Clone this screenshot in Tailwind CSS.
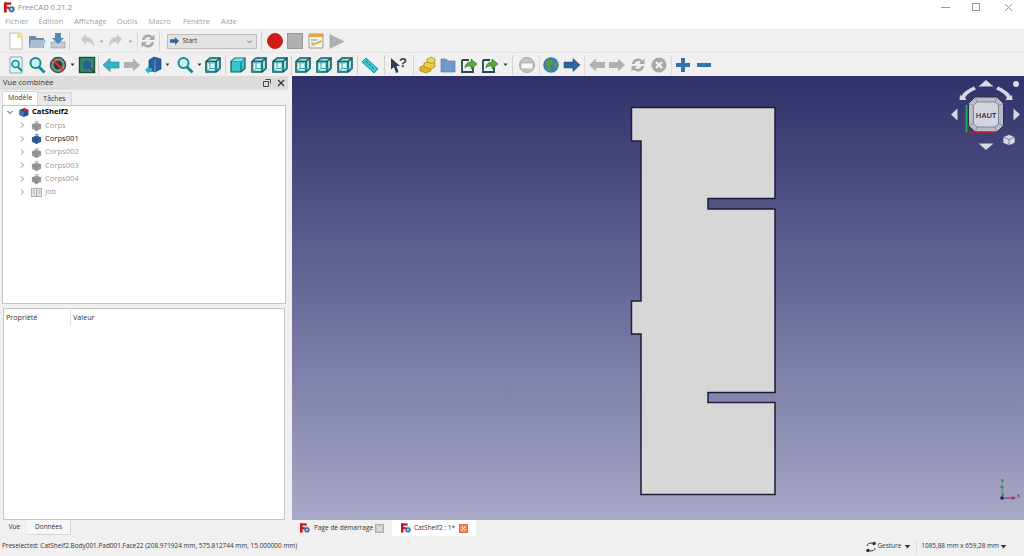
<!DOCTYPE html>
<html lang="fr">
<head>
<meta charset="UTF-8" />
<title>FreeCAD 0.21.2</title>
<script src="https://cdn.jsdelivr.net/npm/@tailwindcss/browser@4"></script>
</head>
<body class="bg-[#f0f0f0]">

<!-- shared icons -->
<svg class="hidden">
  <symbol id="logo" viewBox="0 0 12 12">
    <rect x="0" y="0.5" width="3" height="11" fill="#c5161d"/>
    <rect x="0" y="0.5" width="8" height="2.6" fill="#c5161d"/>
    <rect x="0" y="5" width="6" height="2.4" fill="#c5161d"/>
    <circle cx="8.3" cy="8" r="3" fill="#3b6ea8"/>
    <circle cx="8.3" cy="8" r="3.4" fill="none" stroke="#3b6ea8" stroke-width="1" stroke-dasharray="1 1"/>
    <circle cx="8.3" cy="8" r="1.1" fill="#fff"/>
  </symbol>
  <symbol id="chev-r" viewBox="0 0 8 8"><path d="M3 1.5 5.5 4 3 6.5" fill="none" stroke="#8a8a8a" stroke-width="1"/></symbol>
  <symbol id="chev-d" viewBox="0 0 8 8"><path d="M1.5 3 4 5.5 6.5 3" fill="none" stroke="#444" stroke-width="1"/></symbol>
  <symbol id="drop" viewBox="0 0 5 5"><path d="M0.5 1.5h4L2.5 4z" fill="#333"/></symbol>
  <symbol id="drop-gray" viewBox="0 0 5 5"><path d="M0.5 1.5h4L2.5 4z" fill="#a5a5a5"/></symbol>
  <symbol id="body-gray" viewBox="0 0 12 12">
    <path d="M1 5 6 2.500l5 2.500v4.500L6 12 1 9.500z" fill="#9a9a9a"/>
    <path d="M1 5l5 2.500L11 5M6 7.500V12" fill="none" stroke="#777" stroke-width=".7"/>
    <path d="M3.500 2 6.500 .5 9 2 6 3.500z" fill="#c2c2c2"/>
  </symbol>
  <symbol id="body-blue" viewBox="0 0 12 12">
    <path d="M1 5 6 2.500l5 2.500v4.500L6 12 1 9.500z" fill="#2f6299"/>
    <path d="M1 5l5 2.500L11 5M6 7.500V12" fill="none" stroke="#173e69" stroke-width=".7"/>
    <path d="M3.500 2 6.500 .5 9 2 6 3.500z" fill="#7ba6d2"/>
  </symbol>
  <symbol id="wire" viewBox="0 0 18 18">
    <path d="M2 5.500 6 2h10v10.500L12 16H2z" fill="#9fdfe1" stroke="#155a60" stroke-width="1.600"/>
    <path d="M2 5.500h10V16M12 5.500 16 2" fill="none" stroke="#155a60" stroke-width="1.600"/>
    <path d="M4 8h6v6H4z" fill="#e6f7f7"/>
    <path d="M6 2v10.500h10M6 12.500 2 16" fill="none" stroke="#2aa7ad" stroke-width="1"/>
  </symbol>
  <symbol id="solid" viewBox="0 0 18 18">
    <path d="M2 5.500 6 2h10v10.500L12 16H2z" fill="#37c6cc" stroke="#155a60" stroke-width="1.200"/>
    <path d="M2 5.500h10V16M12 5.500 16 2" fill="none" stroke="#155a60" stroke-width="1"/>
    <path d="M2.500 5.500 6 2.500h9.500L12 5.500z" fill="#7fe3e6"/>
  </symbol>
  <symbol id="mag" viewBox="0 0 18 18">
    <circle cx="7.500" cy="7" r="5" fill="#c9f0f0" stroke="#148c93" stroke-width="2"/>
    <path d="M11 11l5.500 5.500" stroke="#148c93" stroke-width="3"/>
  </symbol>
  <symbol id="arrow-teal" viewBox="0 0 18 18"><path d="M1 9l7-6.500V6h9v6H8v3.500z" fill="#2fb4bd" stroke="#1f8b93" stroke-width=".6"/></symbol>
  <symbol id="arrow-gray-r" viewBox="0 0 18 18"><path d="M17 9l-7-6.500V6H1v6h9v3.500z" fill="#b0b0b0"/></symbol>
  <symbol id="arrow-gray-l" viewBox="0 0 18 18"><path d="M1 9l7-6.500V6h9v6H8v3.500z" fill="#b0b0b0"/></symbol>
  <symbol id="arrow-blue-r" viewBox="0 0 18 18"><path d="M17 9l-7-6.500V6H1v6h9v3.500z" fill="#2d659f" stroke="#1d4674" stroke-width=".5"/></symbol>
  <symbol id="sync-gray" viewBox="0 0 18 18">
    <path d="M3 8a6 6 0 0 1 10.500-3.500L15.500 2.500V8H10l2-2A4 4 0 0 0 5.500 8z" fill="#a8a8a8"/>
    <path d="M15 10a6 6 0 0 1-10.500 3.500L2.500 15.500V10H8l-2 2a4 4 0 0 0 6.500-2z" fill="#a8a8a8"/>
  </symbol>
  <symbol id="link-doc" viewBox="0 0 18 18">
    <path d="M2 4h7M2 4v12h11v-5" fill="none" stroke="#1f4b4f" stroke-width="1.800"/>
    <path d="M5 12c0-4 3-6 6-6V3l6 5-6 5v-3c-3 0-5 0-6 2z" fill="#5aa83c" stroke="#2e6a1e" stroke-width=".6"/>
  </symbol>
</svg>

<div class="w-[1024px] h-[556px] flex flex-col overflow-hidden font-['Open_Sans','Noto_Sans',sans-serif] text-[7.6px] leading-none whitespace-nowrap">

  <!-- title bar -->
  <div class="h-[15px] bg-white flex items-center shrink-0">
    <svg class="w-[11px] h-[11px] ml-[4px]"><use href="#logo"/></svg>
    <span class="ml-[3px] text-[#8c8c8c]">FreeCAD 0.21.2</span>
    <svg class="w-[9px] h-[9px] ml-auto" viewBox="0 0 9 9"><path d="M0 4.500h9" stroke="#9a9a9a"/></svg>
    <svg class="w-[9px] h-[9px] ml-[22px]" viewBox="0 0 9 9"><rect x=".5" y=".5" width="7" height="7" fill="none" stroke="#9a9a9a"/></svg>
    <svg class="w-[9px] h-[9px] ml-[23px] mr-[11px]" viewBox="0 0 9 9"><path d="M1 1l7 7M8 1l-7 7" stroke="#9a9a9a"/></svg>
  </div>

  <!-- menu -->
  <div class="h-[15px] bg-white flex items-center shrink-0 text-[#a0a0a0] border-b border-[#ececec]">
    <span class="ml-[5px]">Fichier</span>
    <span class="ml-[10px]">Édition</span>
    <span class="ml-[11px]">Affichage</span>
    <span class="ml-[10px]">Outils</span>
    <span class="ml-[11px]">Macro</span>
    <span class="ml-[12px]">Fenêtre</span>
    <span class="ml-[11px]">Aide</span>
  </div>

  <!-- toolbar 1 -->
  <div class="h-[23px] flex items-center shrink-0 bg-[#f0f0f0] border-b border-[#e6e6e6]">
    <svg class="w-[18px] h-[18px] ml-[7px]" viewBox="0 0 18 18"><path d="M3 1h9l3 3v13H3z" fill="#fff" stroke="#bcbcbc"/><path d="M10 1h5v5h-5z" fill="#f3ea5c"/></svg>
    <svg class="w-[18px] h-[18px] ml-[3px]" viewBox="0 0 18 18"><path d="M1 4h6l2 2h7v10H1z" fill="#6f8aa3"/><path d="M3 8h15l-3 8H1z" fill="#a9bfd3"/></svg>
    <svg class="w-[18px] h-[18px] ml-[3px]" viewBox="0 0 18 18"><path d="M2 10h14v6H2z" fill="#c3ccd4" stroke="#8c97a2" stroke-width=".6"/><path d="M6 1h6v5h3l-6 6-6-6h3z" fill="#4d8ab5"/></svg>
    <div class="w-px h-[20px] bg-[#d2d2d2] ml-[2px]"></div>
    <svg class="w-[18px] h-[18px] ml-[8px]" viewBox="0 0 18 18"><path d="M3 7l5-5v3c5 0 8 3 8 10-2-4-4-5-8-5v3z" fill="#c8c8c8"/></svg>
    <svg class="w-[5px] h-[5px] ml-[3px]"><use href="#drop-gray"/></svg>
    <svg class="w-[18px] h-[18px] ml-[3px]" viewBox="0 0 18 18"><path d="M15 7l-5-5v3C5 5 2 8 2 15c2-4 4-5 8-5v3z" fill="#c8c8c8"/></svg>
    <svg class="w-[5px] h-[5px] ml-[3px]"><use href="#drop-gray"/></svg>
    <div class="w-px h-[20px] bg-[#dcdcdc] ml-[4px]"></div>
    <svg class="w-[18px] h-[18px] ml-[0.5px]"><use href="#sync-gray"/></svg>
    <div class="w-px h-[20px] bg-[#d2d2d2] ml-[2px]"></div>
    <div class="w-[90px] h-[15px] ml-[7px] flex items-center border border-[#bdbdbd] bg-[#e3e3e3] text-[#333] text-[6.5px]">
      <svg class="w-[11px] h-[10px] ml-[1px] mr-[3px]" viewBox="0 0 18 18"><path d="M17 9l-7-7v4H1v6h9v4z" fill="#2d659f"/></svg>
      <span>Start</span>
      <svg class="w-[7px] h-[7px] ml-auto mr-[3px]" viewBox="0 0 8 8"><path d="M1.500 3 4 5.500 6.500 3" fill="none" stroke="#555"/></svg>
    </div>
    <div class="w-px h-[20px] bg-[#d2d2d2] ml-[4px]"></div>
    <svg class="w-[16px] h-[16px] ml-[5px]" viewBox="0 0 16 16"><circle cx="8" cy="8" r="7.500" fill="#d61a1a" stroke="#9d1414" stroke-width=".8"/></svg>
    <svg class="w-[16px] h-[16px] ml-[4px]" viewBox="0 0 16 16"><rect x=".5" y=".5" width="15" height="15" fill="#b0b0b0" stroke="#999"/></svg>
    <svg class="w-[18px] h-[18px] ml-[4px]" viewBox="0 0 18 18"><path d="M2 2h14v14H2z" fill="#f4f4f4" stroke="#999"/><path d="M2 2h14v3H2z" fill="#e8a33c"/><path d="M4 13l10-5 1 2-10 4z" fill="#c8b13a"/><path d="M4 8h6M4 11h3" stroke="#888"/></svg>
    <svg class="w-[17px] h-[17px] ml-[3px]" viewBox="0 0 17 17"><path d="M1.500 1v15l15-7.500z" fill="#afafaf"/></svg>
  </div>

  <!-- toolbar 2 -->
  <div class="h-[23px] flex items-center shrink-0 bg-[#f0f0f0]">
    <svg class="w-[18px] h-[18px] ml-[7px]" viewBox="0 0 18 18"><path d="M3 1h12v16H3z" fill="#e9f4f5" stroke="#8aa"/><circle cx="8.500" cy="8" r="3.500" fill="#c9f0f0" stroke="#148c93" stroke-width="1.600"/><path d="M11 11l4 4" stroke="#148c93" stroke-width="2.200"/></svg>
    <svg class="w-[18px] h-[18px] ml-[3px]"><use href="#mag"/></svg>
    <svg class="w-[18px] h-[18px] ml-[3px]" viewBox="0 0 18 18"><circle cx="9" cy="9" r="7.500" fill="#7f9a92" stroke="#37524b" stroke-width="1.400"/><circle cx="9" cy="9" r="4.500" fill="#24404a"/><path d="M3.500 3.500l11 11" stroke="#d8342b" stroke-width="2"/></svg>
    <svg class="w-[5px] h-[5px] ml-[3px]"><use href="#drop"/></svg>
    <svg class="w-[18px] h-[18px] ml-[3px]" viewBox="0 0 18 18"><rect x="1.500" y="1.500" width="15" height="15" fill="#2f8e63" stroke="#174e38" stroke-width="1.400"/><path d="M5 6l4-2 4 2v6l-4 2-4-2z" fill="#295f96"/><path d="M12 12l4.500 4.500" stroke="#222" stroke-width="1"/></svg>
    <div class="w-px h-[20px] bg-[#d2d2d2] ml-[2px]"></div>
    <svg class="w-[18px] h-[18px] ml-[3px]"><use href="#arrow-teal"/></svg>
    <svg class="w-[18px] h-[18px] ml-[3px]"><use href="#arrow-gray-r"/></svg>
    <svg class="w-[18px] h-[18px] ml-[3px]" viewBox="0 0 18 18"><path d="M5 4l5-3 7 2v10l-6 3-6-2z" fill="#2a5f9e" stroke="#173a66" stroke-width=".6"/><path d="M11 4v12" stroke="#6d9ccc"/><path d="M1 14l4-4v2h3v4H5v2z" fill="#2fb4bd"/></svg>
    <svg class="w-[5px] h-[5px] ml-[3px]"><use href="#drop"/></svg>
    <svg class="w-[18px] h-[18px] ml-[6px]"><use href="#mag"/></svg>
    <svg class="w-[5px] h-[5px] ml-[3px]"><use href="#drop"/></svg>
    <svg class="w-[18px] h-[18px] ml-[2px]"><use href="#wire"/></svg>
    <div class="w-px h-[20px] bg-[#d2d2d2] ml-[3px]"></div>
    <svg class="w-[18px] h-[18px] ml-[3px]"><use href="#solid"/></svg>
    <svg class="w-[18px] h-[18px] ml-[3px]"><use href="#wire"/></svg>
    <svg class="w-[18px] h-[18px] ml-[3px]"><use href="#wire"/></svg>
    <div class="w-px h-[20px] bg-[#d2d2d2] ml-[2px]"></div>
    <svg class="w-[18px] h-[18px] ml-[2px]"><use href="#wire"/></svg>
    <svg class="w-[18px] h-[18px] ml-[3px]"><use href="#wire"/></svg>
    <svg class="w-[18px] h-[18px] ml-[3px]"><use href="#wire"/></svg>
    <div class="w-px h-[20px] bg-[#d2d2d2] ml-[3px]"></div>
    <svg class="w-[18px] h-[18px] ml-[3px]" viewBox="0 0 18 18"><path d="M1 6l4-4 12 11-4 4z" fill="#37c6cc" stroke="#187f86" stroke-width=".8"/><path d="M5 5l1.500 1.500M8 8l1.500 1.500M11 11l1.500 1.500" stroke="#126469"/></svg>
    <div class="w-px h-[20px] bg-[#d2d2d2] ml-[5px]"></div>
    <svg class="w-[18px] h-[18px] ml-[5px]" viewBox="0 0 18 18"><path d="M1 2l9 8H6.500l2 6-2.500 1-2-6L1 13.500z" fill="#2a3f52"/><text x="9" y="11" font-size="13" font-weight="700" fill="#2a3f52" font-family="Liberation Sans, sans-serif">?</text></svg>
    <div class="w-px h-[20px] bg-[#d2d2d2] ml-[5px]"></div>
    <svg class="w-[18px] h-[18px] ml-[5px]" viewBox="0 0 18 18"><path d="M1 11l5-2 6 2v4l-5 2-6-2z" fill="#e2b520" stroke="#8f7012" stroke-width=".6"/><path d="M5 7l5-2 6 2v4l-4 2-7-2z" fill="#efcb45" stroke="#8f7012" stroke-width=".6"/><path d="M8 3l4-2 4 2v3l-3 1.500L8 6z" fill="#f3d659" stroke="#8f7012" stroke-width=".6"/></svg>
    <svg class="w-[18px] h-[18px] ml-[2px]" viewBox="0 0 18 18"><path d="M2 3h5l2 2h7v11H2z" fill="#6d9ac8" stroke="#4b77a3" stroke-width=".6"/></svg>
    <svg class="w-[18px] h-[18px] ml-[3px]"><use href="#link-doc"/></svg>
    <svg class="w-[18px] h-[18px] ml-[3px]"><use href="#link-doc"/></svg>
    <svg class="w-[5px] h-[5px] ml-[4px]"><use href="#drop"/></svg>
    <div class="w-px h-[20px] bg-[#d2d2d2] ml-[4px]"></div>
    <svg class="w-[18px] h-[18px] ml-[5px]" viewBox="0 0 18 18"><circle cx="9" cy="9" r="7.500" fill="#c4c4c4" stroke="#a6a6a6"/><rect x="3" y="7" width="12" height="6" fill="#f7f7f7" stroke="#999" stroke-width=".6"/></svg>
    <div class="w-px h-[20px] bg-[#dcdcdc] ml-[3px]"></div>
    <svg class="w-[18px] h-[18px] ml-[2px]" viewBox="0 0 18 18"><circle cx="9" cy="9" r="7.800" fill="#3f7fb0"/><path d="M5 3l5 1 1 4-3 1 1 5-3 1-2-6zM12 6l3 1 1 4-3 2z" fill="#5c9a3f"/></svg>
    <svg class="w-[18px] h-[18px] ml-[3px]"><use href="#arrow-blue-r"/></svg>
    <div class="w-px h-[20px] bg-[#dcdcdc] ml-[3px]"></div>
    <svg class="w-[18px] h-[18px] ml-[3px]"><use href="#arrow-gray-l"/></svg>
    <svg class="w-[18px] h-[18px] ml-[2px]"><use href="#arrow-gray-r"/></svg>
    <svg class="w-[18px] h-[18px] ml-[3px]"><use href="#sync-gray"/></svg>
    <svg class="w-[18px] h-[18px] ml-[3px]" viewBox="0 0 18 18"><circle cx="9" cy="9" r="7.500" fill="#a8a8a8"/><path d="M6 6l6 6M12 6l-6 6" stroke="#f3f3f3" stroke-width="2.200"/></svg>
    <div class="w-px h-[20px] bg-[#dcdcdc] ml-[3px]"></div>
    <svg class="w-[18px] h-[18px] ml-[2px]" viewBox="0 0 18 18"><path d="M7 2h4v5h5v4h-5v5H7v-5H2V7h5z" fill="#3573ad"/></svg>
    <svg class="w-[18px] h-[18px] ml-[3px]" viewBox="0 0 18 18"><rect x="2" y="7" width="14" height="4" fill="#3573ad"/></svg>
  </div>

  <!-- main area -->
  <div class="flex-1 flex min-h-0">

    <!-- left dock -->
    <div class="w-[292px] shrink-0 flex flex-col pr-[4px]">
      <div class="h-[14px] bg-[#dcdcdc] flex items-center text-[#333] shrink-0">
        <span class="ml-[3px]">Vue combinée</span>
        <svg class="w-[8px] h-[8px] ml-auto" viewBox="0 0 8 8"><path d="M2.500 .5h5v4M.5 2.500h5v5h-5z" fill="none" stroke="#444"/></svg>
        <svg class="w-[8px] h-[8px] ml-[6px] mr-[3px]" viewBox="0 0 8 8"><path d="M1 1l6 6M7 1L1 7" stroke="#333" stroke-width="1.300"/></svg>
      </div>

      <!-- tree tabs -->
      <div class="h-[15px] flex items-end pl-[2px] text-[#333] text-[6.9px] shrink-0">
        <div class="w-[36px] h-[14px] bg-white border border-b-0 border-[#d8d8d8] flex items-center justify-center">Modèle</div>
        <div class="w-[34px] h-[13px] bg-[#e9e9e9] border-r border-t border-[#d8d8d8] flex items-center justify-center">Tâches</div>
      </div>

      <!-- tree -->
      <div class="h-[199px] ml-[2px] mr-[2px] bg-white border border-[#c4c4c4] shrink-0">
        <div class="h-[13.33px] flex items-center text-black font-bold -mt-[0.5px]">
          <svg class="w-[8px] h-[8px] ml-[3px]"><use href="#chev-d"/></svg>
          <svg class="w-[12px] h-[12px] ml-[4px]" viewBox="0 0 12 12"><path d="M1.500 4 6 2l4.500 2v5L6 11 1.500 9z" fill="#2f4f8f"/><path d="M6 2l4.500 2L6 6z" fill="#c9262c"/><path d="M1.500 4 6 6v5L1.500 9z" fill="#3f6fb0"/></svg>
          <span class="ml-[2px]">CatShelf2</span>
        </div>
        <div class="h-[13.33px] flex items-center text-[#9c9c9c]">
          <svg class="w-[8px] h-[8px] ml-[15px]"><use href="#chev-r"/></svg>
          <svg class="w-[11px] h-[11px] ml-[5px]"><use href="#body-gray"/></svg>
          <span class="ml-[3px]">Corps</span>
        </div>
        <div class="h-[13.33px] flex items-center text-[#222]">
          <svg class="w-[8px] h-[8px] ml-[15px]"><use href="#chev-r"/></svg>
          <svg class="w-[11px] h-[11px] ml-[5px]"><use href="#body-blue"/></svg>
          <span class="ml-[3px]">Corps001</span>
        </div>
        <div class="h-[13.33px] flex items-center text-[#9c9c9c]">
          <svg class="w-[8px] h-[8px] ml-[15px]"><use href="#chev-r"/></svg>
          <svg class="w-[11px] h-[11px] ml-[5px]"><use href="#body-gray"/></svg>
          <span class="ml-[3px]">Corps002</span>
        </div>
        <div class="h-[13.33px] flex items-center text-[#9c9c9c]">
          <svg class="w-[8px] h-[8px] ml-[15px]"><use href="#chev-r"/></svg>
          <svg class="w-[11px] h-[11px] ml-[5px]"><use href="#body-gray"/></svg>
          <span class="ml-[3px]">Corps003</span>
        </div>
        <div class="h-[13.33px] flex items-center text-[#9c9c9c]">
          <svg class="w-[8px] h-[8px] ml-[15px]"><use href="#chev-r"/></svg>
          <svg class="w-[11px] h-[11px] ml-[5px]"><use href="#body-gray"/></svg>
          <span class="ml-[3px]">Corps004</span>
        </div>
        <div class="h-[13.33px] flex items-center text-[#9c9c9c]">
          <svg class="w-[8px] h-[8px] ml-[15px]"><use href="#chev-r"/></svg>
          <svg class="w-[11px] h-[11px] ml-[5px]" viewBox="0 0 12 12"><rect x=".5" y="1.500" width="11" height="9" fill="#e4e4e4" stroke="#a9a9a9"/><path d="M6 1.500v9M2 4h2M2 6.500h2M8 4h2M8 6.500h2" stroke="#a9a9a9"/></svg>
          <span class="ml-[3px]">Job</span>
        </div>
      </div>

      <!-- properties -->
      <div class="h-[212px] ml-[3px] mr-[3px] mt-[4px] bg-white border border-[#c4c4c4] shrink-0">
        <div class="h-[18px] flex items-center text-[#333] text-[7.2px]">
          <span class="w-[67px] pl-[2px] border-r border-[#e4e4e4] h-[16px] flex items-center">Propriété</span>
          <span class="pl-[2px]">Valeur</span>
        </div>
      </div>

      <!-- bottom tabs -->
      <div class="h-[16px] flex items-start pl-[2px] text-[#333] text-[6.5px] shrink-0">
        <div class="w-[25px] h-[14px] flex items-center justify-center">Vue</div>
        <div class="w-[44px] h-[15px] bg-[#f7f7f7] border-r border-b border-[#d8d8d8] flex items-center justify-center">Données</div>
      </div>
    </div>

    <!-- 3d view and document tabs -->
    <div class="flex-1 flex flex-col min-w-0">
      <div class="relative h-[444px] shrink-0 bg-linear-to-b from-[#31316a] to-[#a9a9c8]">
        <svg class="absolute inset-0 w-[732px] h-[444px]" viewBox="292 76 732 444">
          <!-- part outline -->
          <path d="M631.500 107.500H775V198.500H708V209H775V392.500H708V402.500H775V494.500H641V334H631.500V301H641V141H631.500Z" fill="#d7d7d7" stroke="#1d1d3a" stroke-width="1.500"/>
          <!-- nav cube -->
          <path d="M975 97h22l6.500 6.500v22l-6.500 6.500h-22l-6.500-6.500v-22z" fill="#b9bbca" stroke="#2f2f4a" stroke-width="1"/>
          <path d="M977 102h18l3.500 3.500v18l-3.500 3.500h-18l-3.500-3.500v-18z" fill="#d2d4de" stroke="#6f7088" stroke-width=".8"/>
          <path d="M975 97l2 5M997 97l-2 5M1003.500 103.500l-5 2M1003.500 125.500l-5-2M997 132l-2-5M975 132l2-5M968.500 125.500l5-2M968.500 103.500l5 2" stroke="#6f7088" stroke-width=".6"/>
          <text x="986" y="117.500" font-size="7.500" font-weight="600" text-anchor="middle" fill="#1f1f2e" font-family="Open Sans, sans-serif">HAUT</text>
          <path d="M966.500 105V132.500" stroke="#1fb04f" stroke-width="1.800"/>
          <path d="M968 132.500h27" stroke="#a8243a" stroke-width="1.800"/>
          <path d="M986 80l7.500 6.500h-15z" fill="#d8d9e2"/>
          <path d="M986 150l7.500-6.500h-15z" fill="#d8d9e2"/>
          <path d="M951 114.500l6.500-6v12z" fill="#d8d9e2"/>
          <path d="M1020 114.500l-6.500-6v12z" fill="#d8d9e2"/>
          <path d="M961 96.500c3-5 8-8 13-10l2 3c-5 2-8 4-11 8l1.500 2.500-7 0 .5-6z" fill="#d8d9e2"/>
          <path d="M1011 96.500c-3-5-8-8-13-10l-2 3c5 2 8 4 11 8l-1.500 2.500 7 0-.5-6z" fill="#d8d9e2"/>
          <circle cx="1016" cy="84" r="3" fill="#d8d9e2"/>
          <path d="M1009 134.500l6 2.500v6l-6 2.500-6-2.500v-6z" fill="#d8d9e2" stroke="#42425e" stroke-width=".6"/>
          <path d="M1003 137l6 2.500 6-2.500M1009 139.500v6" fill="none" stroke="#42425e" stroke-width=".6"/>
          <!-- axis cross -->
          <path d="M1002 498v-11" stroke="#3ea36a" stroke-width="1.200"/>
          <path d="M1002 484l-2 4h4z" fill="#2f9b5e"/>
          <path d="M1002 498h11" stroke="#a0306a" stroke-width="1.200"/>
          <path d="M1016 498l-4-2v4z" fill="#b02c5c"/>
          <circle cx="1002" cy="498" r="1.800" fill="#1e1e8c"/>
          <text x="1001" y="483" font-size="5" fill="#222" font-family="Open Sans, sans-serif">Y</text>
          <text x="1017" y="498" font-size="5" fill="#222" font-family="Open Sans, sans-serif">X</text>
          <text x="1002" y="496" font-size="4" fill="#222" font-family="Open Sans, sans-serif">Z</text>
        </svg>
      </div>

      <!-- document tabs -->
      <div class="h-[16px] flex items-stretch text-[#333] text-[6.5px] shrink-0">
        <div class="flex items-center w-[100px] pl-[8px]">
          <svg class="w-[10px] h-[10px]"><use href="#logo"/></svg>
          <span class="ml-[4px] w-[57px]">Page de démarrage</span>
          <span class="ml-[4px] w-[9px] h-[9px] bg-[#c9c9c9] border border-[#aeaeae] flex items-center justify-center">
            <svg class="w-[5px] h-[5px]" viewBox="0 0 5 5"><path d="M.5 .5l4 4M4.500 .5l-4 4" stroke="#fff"/></svg>
          </span>
        </div>
        <div class="flex items-center w-[84px] pl-[9px] bg-white">
          <svg class="w-[10px] h-[10px]"><use href="#logo"/></svg>
          <span class="ml-[3px] w-[41px]">CatShelf2 : 1*</span>
          <span class="ml-[4px] w-[9px] h-[9px] bg-[#ee8a5e] border border-[#d9724a] flex items-center justify-center">
            <svg class="w-[5px] h-[5px]" viewBox="0 0 5 5"><path d="M.5 .5l4 4M4.500 .5l-4 4" stroke="#fff"/></svg>
          </span>
        </div>
      </div>
    </div>
  </div>

  <!-- status bar -->
  <div class="h-[20px] shrink-0 flex items-center pt-[1px] text-[#333] text-[6.45px] bg-[#f0f0f0]">
    <span class="ml-[2px]">Preselected: CatShelf2.Body001.Pad001.Face22 (208.971924 mm, 575.812744 mm, 15.000000 mm)</span>
    <div class="ml-auto flex items-center">
      <svg class="w-[10px] h-[12px]" viewBox="0 0 10 12"><path d="M1 5c0-2 2-3 5-3" fill="none" stroke="#333"/><circle cx="8" cy="2.500" r="1.800" fill="#333"/><path d="M9 7c0 2-2 3-5 3" fill="none" stroke="#333"/><circle cx="2" cy="9.500" r="1.800" fill="#333"/></svg>
      <span class="ml-[1px]">Gesture</span>
      <svg class="w-[7px] h-[7px] ml-[3px]" viewBox="0 0 5 5"><path d="M.5 1.500h4L2.500 4z" fill="#333"/></svg>
      <div class="w-px h-[14px] bg-[#dcdcdc] ml-[5px]"></div>
      <span class="ml-[4px]">1085,88 mm x 659,28 mm</span>
      <svg class="w-[7px] h-[7px] ml-[1px] mr-[17px]" viewBox="0 0 5 5"><path d="M.5 1.500h4L2.500 4z" fill="#333"/></svg>
    </div>
  </div>
</div>
</body>
</html>
